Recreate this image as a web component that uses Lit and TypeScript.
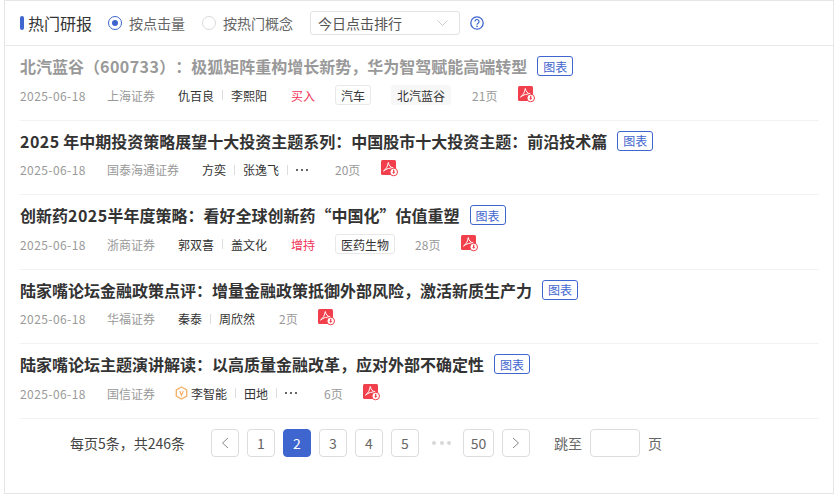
import { LitElement, html, css, svg } from "lit";
import { customElement } from "lit/decorators.js";

interface Row {
  title: string; date: string; org: string; vip?: boolean; authors: string[]; more?: boolean;
  rating?: string; tags: { t: string; soft?: boolean }[]; pages: string; visited?: boolean;
}
const rows: Row[] = [
  { title: "北汽蓝谷（600733）：极狐矩阵重构增长新势，华为智驾赋能高端转型", date: "2025-06-18", org: "上海证券", authors: ["仇百良", "李熙阳"], rating: "买入", tags: [{ t: "汽车" }, { t: "北汽蓝谷", soft: true }], pages: "21页", visited: true },
  { title: "2025 年中期投资策略展望十大投资主题系列：中国股市十大投资主题：前沿技术篇", date: "2025-06-18", org: "国泰海通证券", authors: ["方奕", "张逸飞"], more: true, tags: [], pages: "20页" },
  { title: "创新药2025半年度策略：看好全球创新药“中国化”估值重塑", date: "2025-06-18", org: "浙商证券", authors: ["郭双喜", "盖文化"], rating: "增持", tags: [{ t: "医药生物" }], pages: "28页" },
  { title: "陆家嘴论坛金融政策点评：增量金融政策抵御外部风险，激活新质生产力", date: "2025-06-18", org: "华福证券", authors: ["秦泰", "周欣然"], tags: [], pages: "2页" },
  { title: "陆家嘴论坛主题演讲解读：以高质量金融改革，应对外部不确定性", date: "2025-06-18", org: "国信证券", vip: true, authors: ["李智能", "田地"], more: true, tags: [], pages: "6页" },
];

const pdf = html`<svg class="pdf" width="17" height="17" viewBox="0 0 17 17">
  <rect x="0" y="0" width="15" height="15" rx="1.500" fill="#f1404b"></rect>
  <path d="M2.500 11C5 9.500 6.800 6 7.300 2.500c.4 3 2.500 5 5 5.500-3-.2-6.800.5-9.800 3z" fill="none" stroke="#fff" stroke-width="1"></path>
  <circle cx="12.700" cy="12" r="3.800" fill="#fff" stroke="#f1404b" stroke-width="1"></circle>
  <path d="M12.700 9.800v2.400" stroke="#f1404b" stroke-width="1.300"></path>
  <path d="M11.200 11.900h3l-1.500 2z" fill="#f1404b"></path>
</svg>`;

const vip = svg`<svg class="vip" width="13" height="14" viewBox="0 0 13 14">
  <path d="M6.500 1 L11.700 4 V10 L6.500 13 L1.300 10 V4 Z" fill="#fff" stroke="#f5b26b" stroke-width="1.400"></path>
  <path d="M4.800 5 L6.500 9.500 L8.200 5" fill="none" stroke="#f5b26b" stroke-width="1.200"></path>
</svg>`;

@customElement("app-root")
export class AppRoot extends LitElement {
  static styles = css`
    :host { display: block; width: 834px; height: 496px; background: #fff; box-sizing: border-box; padding: 0 0 2px 4px;
      font-family: "Noto Sans CJK SC", "Open Sans", sans-serif; color: #333; overflow: hidden; }
    .card { height: 494px; box-sizing: border-box; border: 1px solid #e6e6e6; display: flex; flex-direction: column; }
    .head { height: 45px; flex: none; box-sizing: border-box; border-bottom: 1px solid #e8e8e8; display: flex; align-items: center; padding-left: 15px; }
    .bar { width: 4px; height: 14px; border-radius: 2px; background: #3f66cf; margin-right: 4px; }
    .h { font-size: 16px; color: #333; width: 64px; white-space: nowrap; margin-right: 16px; line-height: 20px; }
    .radio { width: 14px; height: 14px; box-sizing: border-box; border-radius: 50%; border: 1px solid #d9d9d9; margin-right: 7px; display: flex; align-items: center; justify-content: center; }
    .radio.on { border-color: #3f66cf; }
    .radio.on::after { content: ""; width: 6px; height: 6px; border-radius: 50%; background: #3f66cf; }
    .rl { font-size: 14px; color: #666; white-space: nowrap; line-height: 20px; margin-right: 17px; }
    .sel { width: 150px; height: 24px; box-sizing: border-box; border: 1px solid #e3e3e3; border-radius: 3px; display: flex; align-items: center; justify-content: space-between; padding: 0 11px 0 7px; font-size: 14px; color: #555; margin-right: 10px; }
    .help { display: block; }
    .list { padding: 0 14px 0 15px; flex: none; }
    .row { height: 74.500px; box-sizing: border-box; border-bottom: 1px solid #f2f2f2; padding-top: 7px; }
    .title { display: flex; align-items: center; height: 26px; }
    .t { font-size: 16px; font-weight: 700; color: #333; white-space: nowrap; line-height: 26px; text-spacing-trim: space-all; }
    .num { letter-spacing: .45px; }
    .visited .t { color: #999; }
    .chart { margin-left: 10px; width: 36px; height: 20px; box-sizing: border-box; border: 1px solid #3f66cf; border-radius: 3px; color: #3f66cf; font-size: 12px; display: flex; align-items: center; justify-content: center; }
    .meta { display: flex; align-items: center; height: 22px; margin-top: 5px; font-size: 12px; white-space: nowrap; }
    .date, .org, .pages { color: #999; }
    .date { width: 87px; letter-spacing: .42px; }
    .org { margin-right: 23px; }
    .org.v { margin-right: 20px; }
    .au { color: #333; }
    .sep { width: 1px; height: 10px; background: #ddd; margin: 0 8px; }
    .dots { display: flex; gap: 3px; margin-right: 27px; }
    .dots i { width: 2px; height: 2px; border-radius: 50%; background: #333; }
    .authors { display: flex; align-items: center; }
    .rating { color: #f0355a; margin-left: 24px; margin-right: 20px; }
    .tag { height: 20px; box-sizing: border-box; padding: 0 5px; border: 1px solid #e8e8e8; border-radius: 3px; display: flex; align-items: center; color: #333; margin-right: 20px; }
    .tag.soft { background: #f7f7f7; border-color: #f7f7f7; margin-right: 21px; }
    .pages { margin-right: 20.500px; }
    .pages.lead { margin-left: 24px; }
    .pdf { display: block; margin-top: -2px; }
    .vip { margin-right: 3px; display: block; }
    .pager { display: flex; align-items: center; height: 28px; margin-top: 10.500px; padding-left: 65px; font-size: 14px; color: #555; }
    .total { width: 141px; color: #444; white-space: nowrap; }
    .p { width: 28px; height: 28px; box-sizing: border-box; border: 1px solid #ddd; border-radius: 4px; display: flex; align-items: center; justify-content: center; margin-right: 8px; color: #666; font-size: 14px; }
    .p.on { background: #3f66cf; border-color: #3f66cf; color: #fff; }
    .p.wide { width: 31px; }
    .ell { width: 36px; box-sizing: border-box; padding-left: 5px; display: flex; gap: 3.500px; }
    .ell i { width: 4px; height: 4px; border-radius: 50%; background: #d8d8d8; }
    .goto { margin-left: 16px; margin-right: 8px; color: #666; }
    .inp { width: 50px; height: 28px; box-sizing: border-box; border: 1px solid #ddd; border-radius: 4px; margin-right: 8px; }
    .unit { color: #666; }
  `;

  renderTitle(t: string) {
    return t.split(/(\d+)/).map((s, i) => (i % 2 ? html`<span class="num">${s}</span>` : s));
  }

  renderRow(r: Row) {
    return html`<div class="row ${r.visited ? "visited" : ""}">
      <div class="title"><span class="t">${this.renderTitle(r.title)}</span><span class="chart">图表</span></div>
      <div class="meta">
        <span class="date">${r.date}</span>
        <span class="org ${r.vip ? "v" : ""}">${r.org}</span>
        ${r.vip ? vip : ""}
        <span class="authors">
          ${r.authors.map((a, i) => html`${i ? html`<span class="sep"></span>` : ""}<span class="au">${a}</span>`)}
          ${r.more ? html`<span class="sep"></span><span class="dots"><i></i><i></i><i></i></span>` : ""}
        </span>
        ${r.rating ? html`<span class="rating">${r.rating}</span>` : ""}
        ${r.tags.map((t) => html`<span class="tag ${t.soft ? "soft" : ""}">${t.t}</span>`)}
        <span class="pages ${!r.rating && !r.more ? "lead" : ""}">${r.pages}</span>
        ${pdf}
      </div>
    </div>`;
  }

  render() {
    return html`<div class="card">
      <div class="head">
        <span class="bar"></span><span class="h">热门研报</span>
        <span class="radio on"></span><span class="rl">按点击量</span>
        <span class="radio"></span><span class="rl">按热门概念</span>
        <span class="sel">今日点击排行
          <svg width="11" height="6" viewBox="0 0 11 6"><path d="M.5.500l5 5 5-5" fill="none" stroke="#ccc" stroke-width="1"></path></svg>
        </span>
        <svg class="help" width="14" height="14" viewBox="0 0 14 14">
          <circle cx="7" cy="7" r="6.200" fill="none" stroke="#3f66cf" stroke-width="1.300"></circle>
          <path d="M5 5.600a2 2 0 1 1 3.100 1.600c-.7.500-1.100.9-1.100 1.600" fill="none" stroke="#3f66cf" stroke-width="1.200"></path>
          <circle cx="7" cy="10.400" r=".8" fill="#3f66cf"></circle>
        </svg>
      </div>
      <div class="list">${rows.map((r) => this.renderRow(r))}</div>
      <div class="pager">
        <span class="total">每页5条，共246条</span>
        <span class="p"><svg width="8" height="12" viewBox="0 0 8 12"><path d="M7 1L1.500 6 7 11" fill="none" stroke="#888" stroke-width="1"></path></svg></span>
        <span class="p">1</span><span class="p on">2</span><span class="p">3</span><span class="p">4</span><span class="p">5</span>
        <span class="ell"><i></i><i></i><i></i></span>
        <span class="p wide">50</span>
        <span class="p"><svg width="8" height="12" viewBox="0 0 8 12"><path d="M1 1l5.500 5L1 11" fill="none" stroke="#888" stroke-width="1"></path></svg></span>
        <span class="goto">跳至</span><span class="inp"></span><span class="unit">页</span>
      </div>
    </div>`;
  }
}
